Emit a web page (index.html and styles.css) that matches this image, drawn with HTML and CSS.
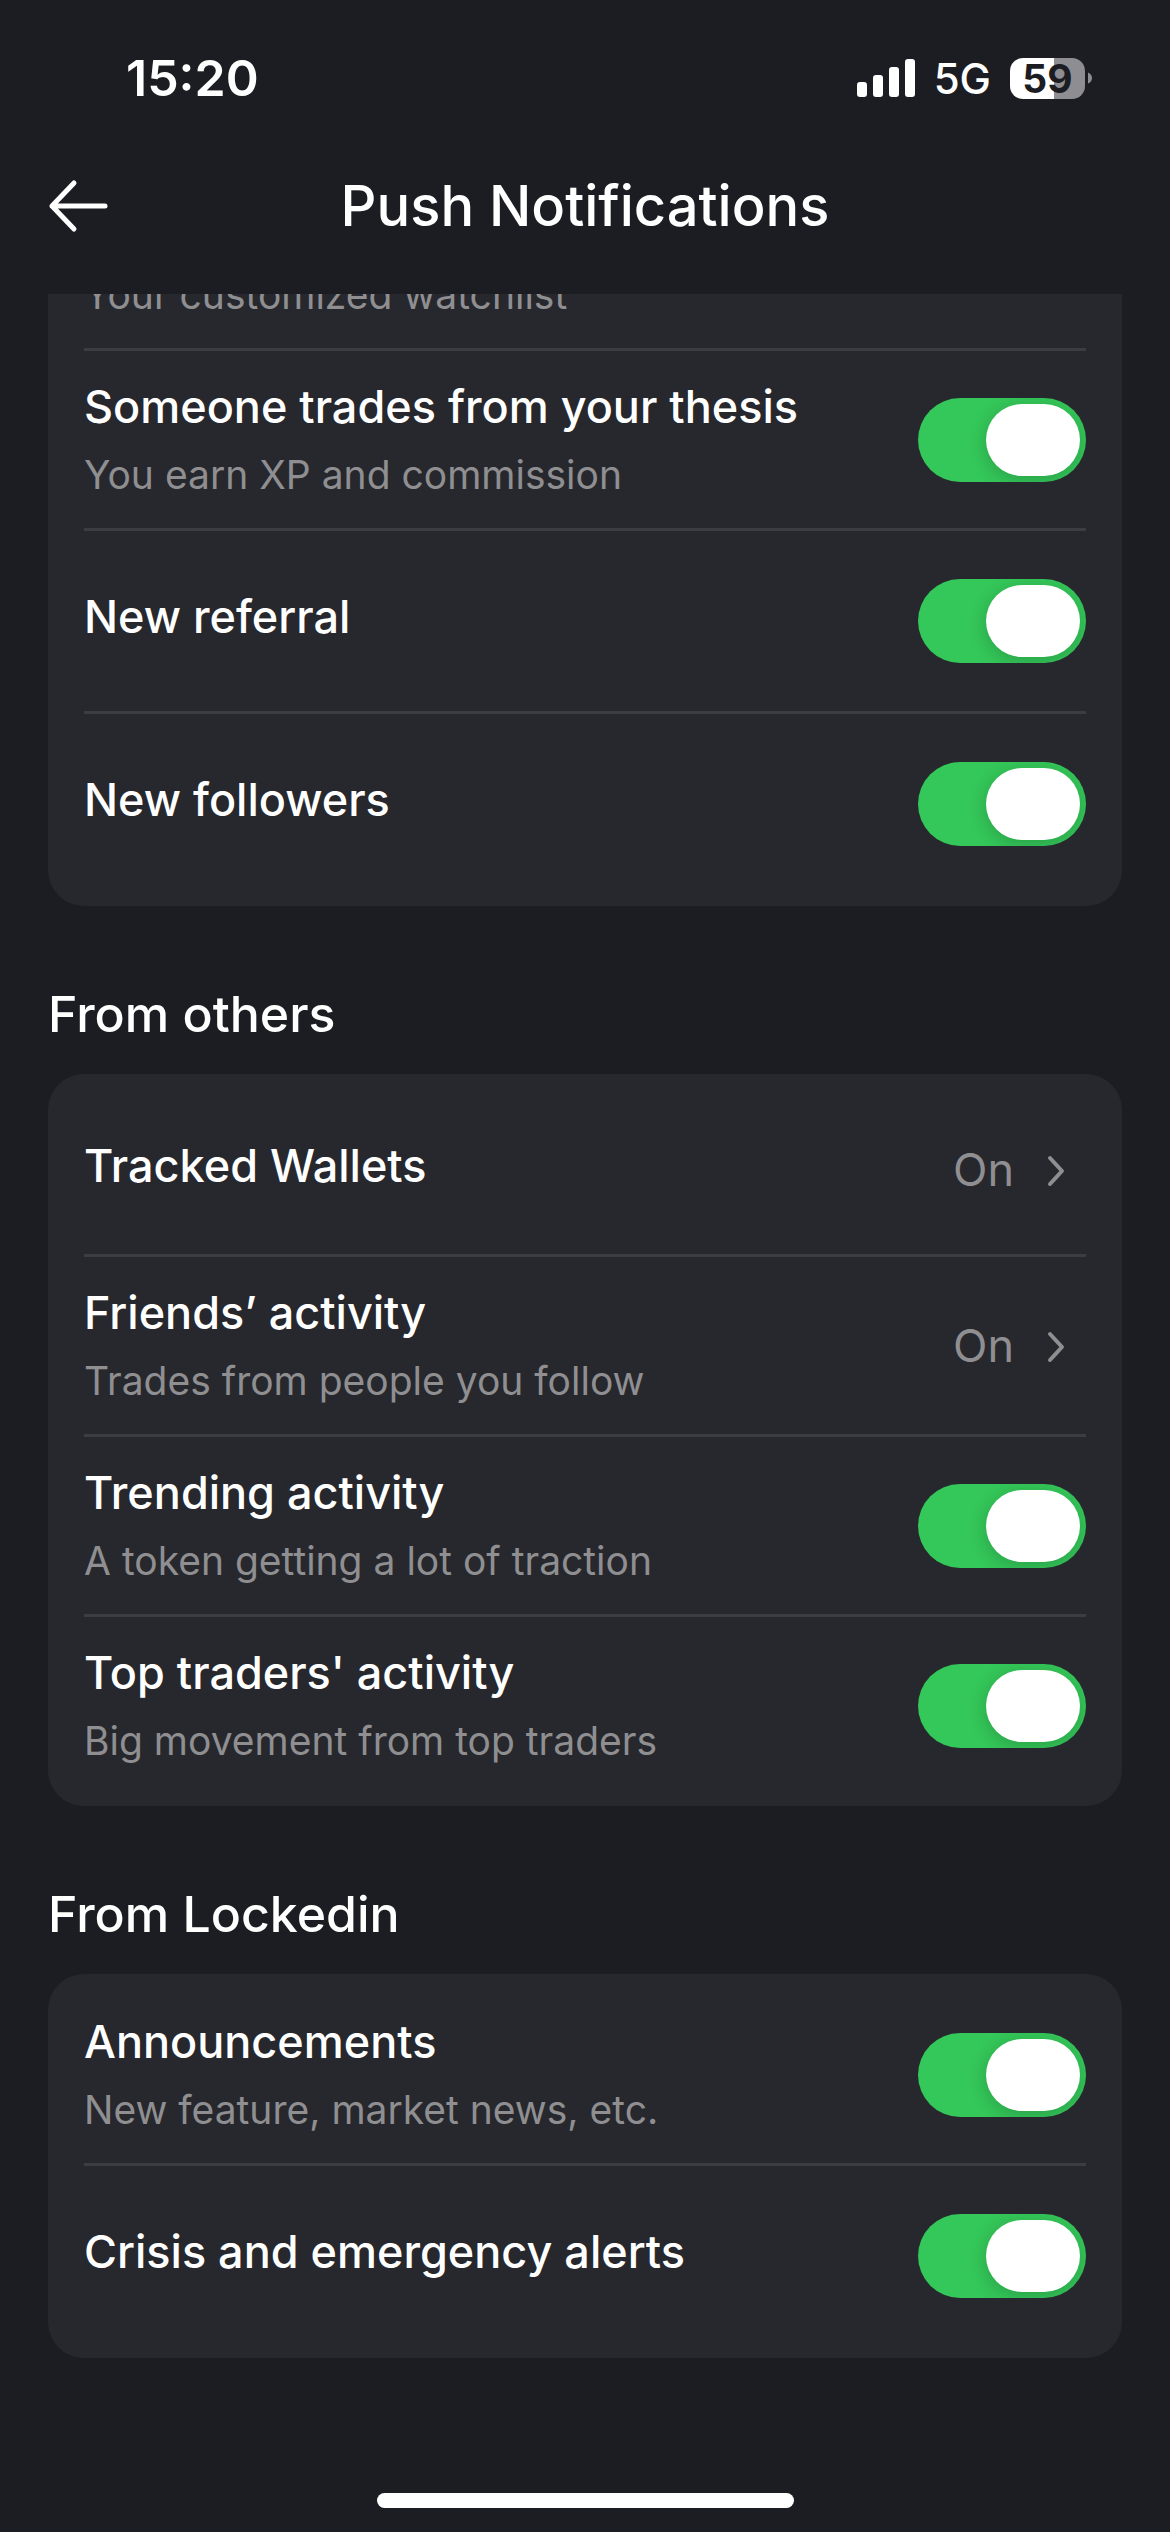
FILE: index.html
```html
<!DOCTYPE html>
<html lang="en">
<head>
<meta charset="utf-8">
<meta name="viewport" content="width=device-width, initial-scale=1">
<title>Push Notifications</title>
<link rel="stylesheet" href="styles.css">
</head>
<body>
<div class="status-bar">
  <span class="status-time">15:20</span>
  <div class="status-icons">
    <svg class="signal" viewBox="0 0 58 38" aria-hidden="true">
      <rect x="0" y="23" width="10" height="15" rx="3"/>
      <rect x="16" y="16" width="10" height="22" rx="3"/>
      <rect x="32" y="8" width="10" height="30" rx="3"/>
      <rect x="48" y="0" width="10" height="38" rx="3"/>
    </svg>
    <span class="network">5G</span>
    <div class="battery">
      <span class="battery-level">59</span>
      <svg class="battery-tip" viewBox="0 0 5 14" aria-hidden="true"><path d="M0 0C3 1 5 4 5 7S3 13 0 14Z"/></svg>
    </div>
  </div>
</div>

<header class="header">
  <button class="back" type="button" aria-label="Back">
    <svg class="back-icon" viewBox="0 0 60 54" aria-hidden="true"><path d="M26 4L4 27L26 50M4 27H57"/></svg>
  </button>
  <h1 class="title">Push Notifications</h1>
</header>

<main class="content">
  <section class="card card-scrolled">
    <div class="row row-scrolled">
      <span class="text"><span class="desc">Your customized watchlist</span></span>
    </div>
    <label class="row">
      <span class="text"><span class="name">Someone trades from your thesis</span><span class="desc">You earn XP and commission</span></span>
      <input class="switch" type="checkbox" role="switch" checked>
    </label>
    <label class="row row-single">
      <span class="text"><span class="name">New referral</span></span>
      <input class="switch" type="checkbox" role="switch" checked>
    </label>
    <label class="row row-single">
      <span class="text"><span class="name">New followers</span></span>
      <input class="switch" type="checkbox" role="switch" checked>
    </label>
  </section>

  <h2 class="section-title">From others</h2>
  <section class="card">
    <a class="row row-single" href="#wallets">
      <span class="text"><span class="name">Tracked Wallets</span></span>
      <span class="value">On</span>
      <svg class="chevron" viewBox="0 0 60 60" aria-hidden="true"><path d="M24 18L36 31L24 44"/></svg>
    </a>
    <a class="row" href="#friends">
      <span class="text"><span class="name">Friends’ activity</span><span class="desc">Trades from people you follow</span></span>
      <span class="value">On</span>
      <svg class="chevron" viewBox="0 0 60 60" aria-hidden="true"><path d="M24 18L36 31L24 44"/></svg>
    </a>
    <label class="row">
      <span class="text"><span class="name">Trending activity</span><span class="desc">A token getting a lot of traction</span></span>
      <input class="switch" type="checkbox" role="switch" checked>
    </label>
    <label class="row">
      <span class="text"><span class="name">Top traders' activity</span><span class="desc">Big movement from top traders</span></span>
      <input class="switch" type="checkbox" role="switch" checked>
    </label>
  </section>

  <h2 class="section-title">From Lockedin</h2>
  <section class="card">
    <label class="row">
      <span class="text"><span class="name">Announcements</span><span class="desc">New feature, market news, etc.</span></span>
      <input class="switch" type="checkbox" role="switch" checked>
    </label>
    <label class="row row-single">
      <span class="text"><span class="name">Crisis and emergency alerts</span></span>
      <input class="switch" type="checkbox" role="switch" checked>
    </label>
  </section>
</main>

<div class="home-bar"></div>
</body>
</html>
```
FILE: styles.css
```css
:root {
  --bg: #1c1d22;
  --card: #27282d;
  --line: #3c3d41;
  --muted: #8f8f92;
  --green: #34c759;
}

* {
  box-sizing: border-box;
}

body {
  margin: 0;
  min-height: 100vh;
  display: flex;
  flex-direction: column;
  background: var(--bg);
  color: #fff;
  font-family: Inter, "Liberation Sans", sans-serif;
}

/* Status bar */
.status-bar {
  display: flex;
  align-items: center;
  justify-content: space-between;
  height: 117px;
  padding: 39px 78px 0 126px;
}

.status-time {
  font-size: 50px;
  font-weight: 600;
}

.status-icons {
  display: flex;
  align-items: center;
  gap: 19px;
}

.signal {
  width: 58px;
  height: 38px;
  fill: #fff;
}

.network {
  padding-top: 2px;
  font-size: 42px;
  font-weight: 500;
  line-height: 42px;
}

.battery {
  display: flex;
  align-items: center;
  gap: 3px;
}

.battery-level {
  width: 75px;
  border-radius: 13px;
  background: linear-gradient(90deg, #fff 59%, #8e8e92 59%);
  color: var(--bg);
  font-size: 39px;
  font-weight: 700;
  line-height: 41px;
  text-align: center;
}

.battery-tip {
  width: 4px;
  height: 14px;
  fill: #8e8e92;
}

/* Header */
.header {
  display: grid;
  grid-template-columns: 60px 1fr 60px;
  align-items: center;
  height: 177px;
  padding: 0 48px;
}

.back {
  display: flex;
  padding: 0;
  border: 0;
  background: none;
}

.back-icon {
  width: 60px;
  height: 54px;
  fill: none;
  stroke: #fff;
  stroke-width: 5;
  stroke-linecap: round;
  stroke-linejoin: round;
}

.title {
  margin: 0;
  font-size: 56px;
  font-weight: 500;
  line-height: 72px;
  text-align: center;
}

/* Settings */
.content {
  flex: 1;
  padding: 0 48px;
}

.section-title {
  margin: 72px 0 24px;
  font-size: 50px;
  font-weight: 500;
  line-height: 72px;
}

.card {
  padding: 12px 36px;
  border-radius: 36px;
  background: var(--card);
}

.card-scrolled {
  padding-top: 0;
  border-radius: 0 0 36px 36px;
}

.row {
  display: flex;
  align-items: center;
  padding: 24px 0;
  color: inherit;
  text-decoration: none;
}

.row + .row {
  border-top: 3px solid var(--line);
}

.row-single {
  padding: 48px 0;
}

/* First row, partly scrolled under the header */
.row-scrolled {
  align-items: flex-end;
  height: 54px;
  overflow: hidden;
}

.text {
  display: flex;
  flex-direction: column;
  flex: 1;
}

.name {
  padding-bottom: 9px;
  font-size: 45px;
  font-weight: 500;
  line-height: 63px;
}

.desc {
  padding-bottom: 1px;
  color: var(--muted);
  font-size: 39px;
  line-height: 56px;
}

.value {
  padding-right: 12px;
  color: var(--muted);
  font-size: 45px;
  line-height: 62px;
}

.chevron {
  width: 60px;
  height: 60px;
  fill: none;
  stroke: var(--muted);
  stroke-width: 4;
  stroke-linecap: round;
  stroke-linejoin: round;
}

.switch {
  appearance: none;
  display: flex;
  flex: none;
  width: 168px;
  height: 84px;
  margin: 0;
  padding: 6px;
  border-radius: 42px;
  background: #39393d;
  overflow: hidden;
}

.switch::before {
  content: "";
  width: 94px;
  height: 72px;
  border-radius: 36px;
  background: #fff;
  box-shadow: 0 4px 18px rgb(0 0 0 / 20%);
}

.switch:checked {
  justify-content: flex-end;
  background: var(--green);
}

.home-bar {
  width: 417px;
  height: 15px;
  margin: 24px auto;
  border-radius: 8px;
  background: #fff;
}
```
